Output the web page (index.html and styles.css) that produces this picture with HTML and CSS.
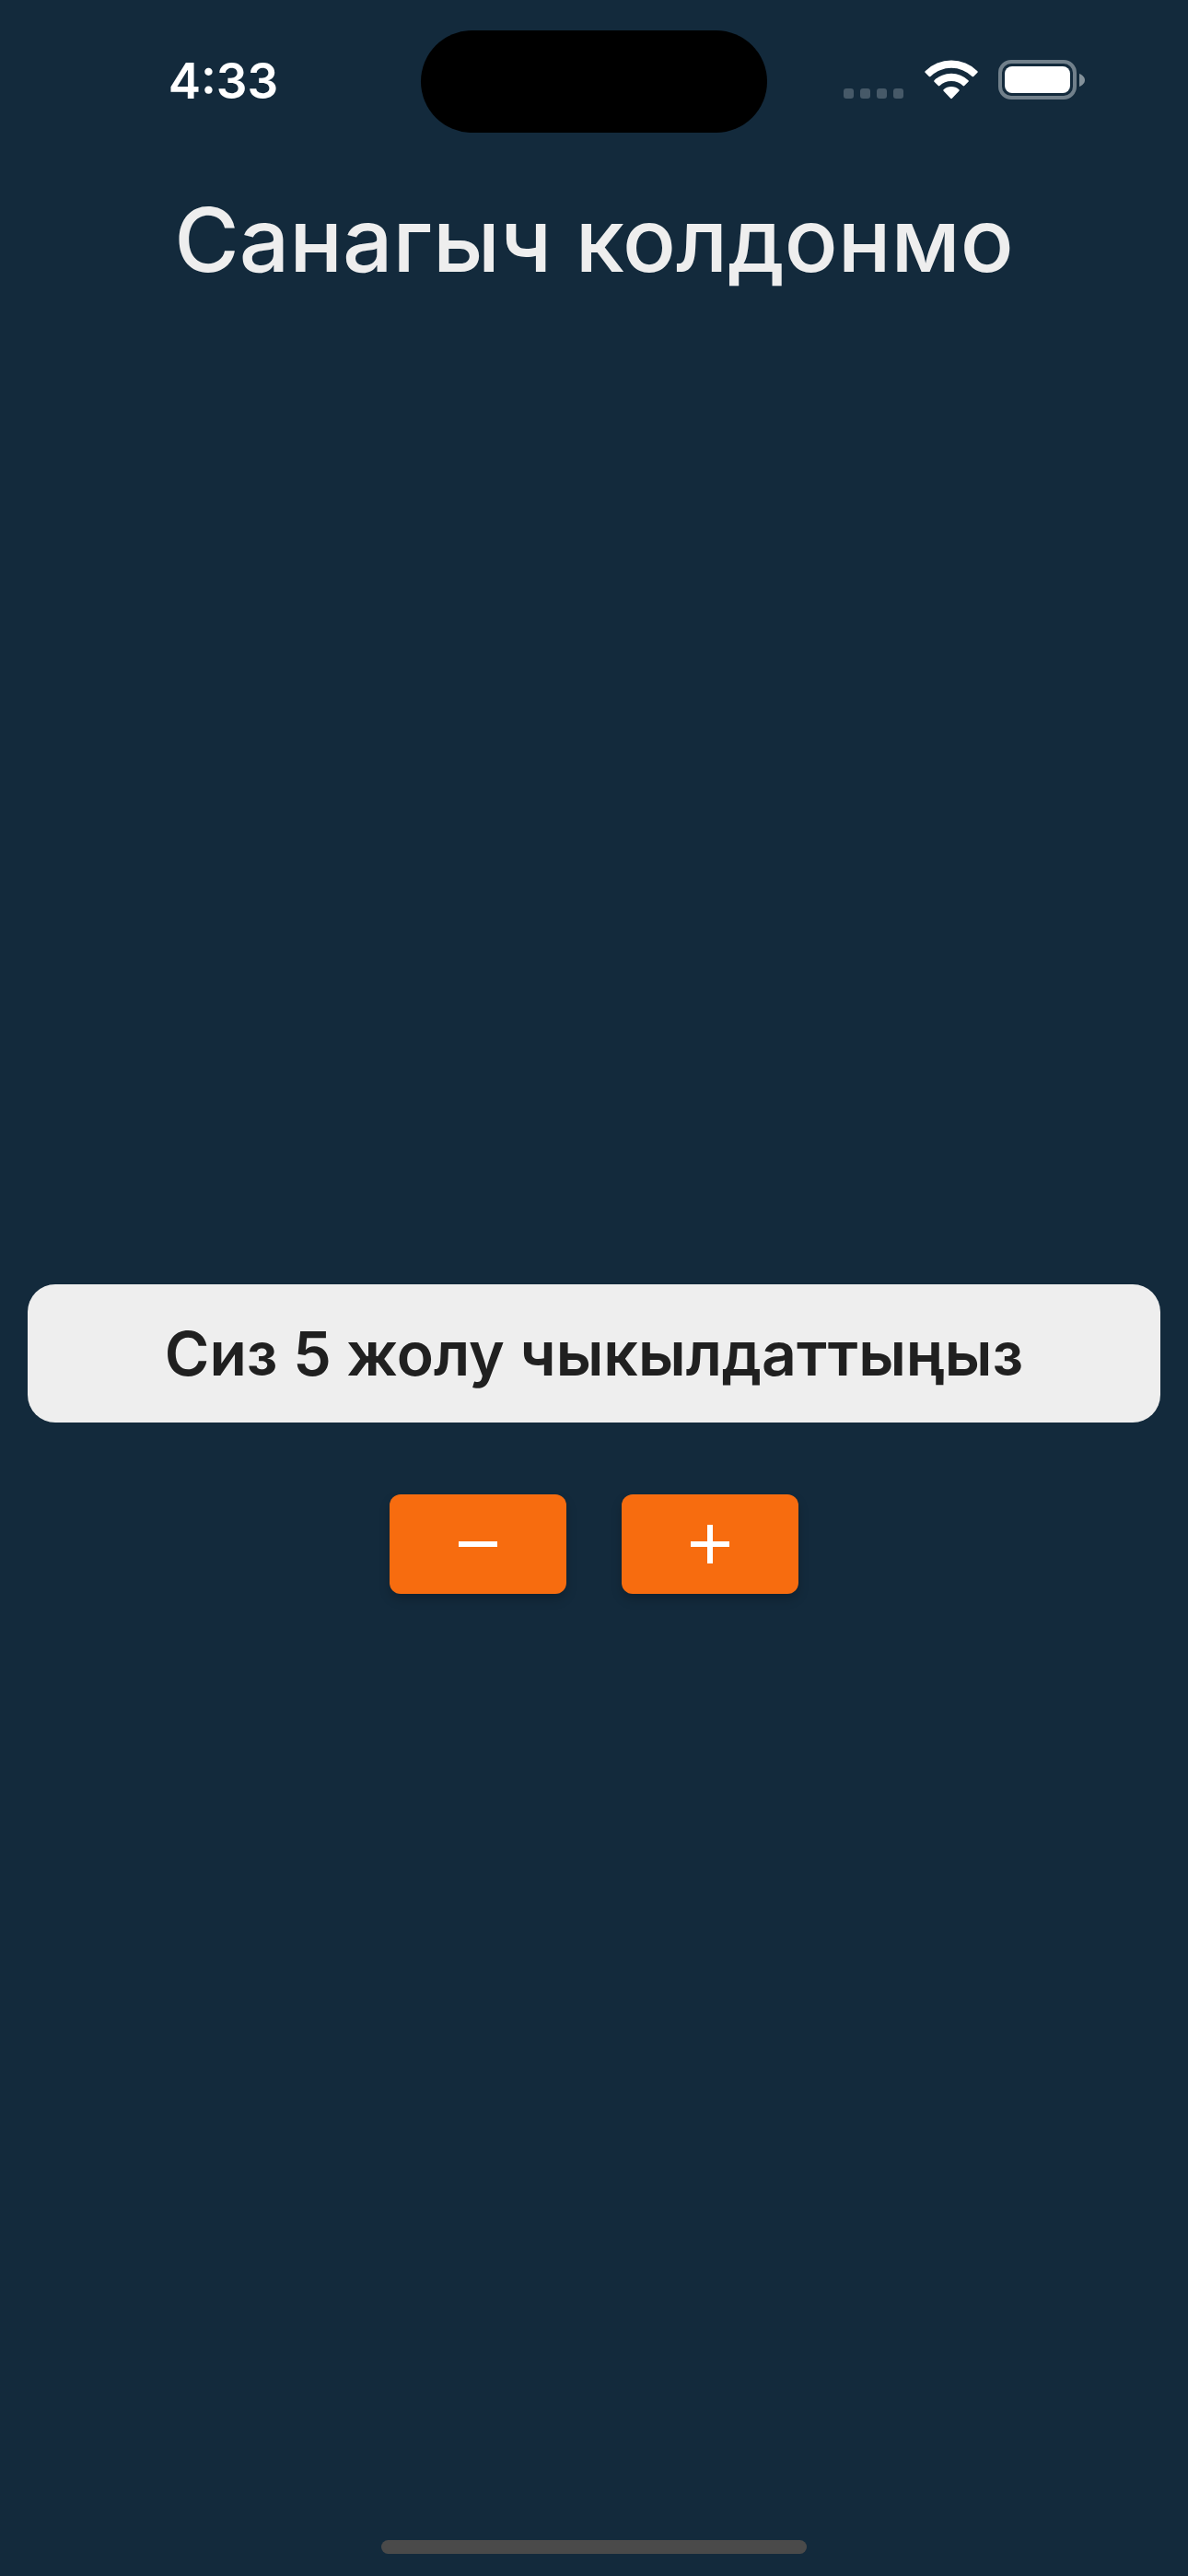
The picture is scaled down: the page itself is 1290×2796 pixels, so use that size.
FILE: index.html
```html
<!DOCTYPE html>
<html lang="ky">
<head>
<meta charset="utf-8">
<meta name="viewport" content="width=device-width, initial-scale=1">
<title>Санагыч колдонмо</title>
<link rel="stylesheet" href="styles.css">
</head>
<body>
<div class="screen">
  <div class="status-bar">
    <time class="clock">4:33</time>
    <div class="island"></div>
    <div class="indicators">
      <svg class="cellular" width="66" height="44" viewBox="0 0 66 44" aria-hidden="true">
        <rect x="0" y="31" width="11" height="11" rx="3"/>
        <rect x="18" y="31" width="11" height="11" rx="3"/>
        <rect x="36" y="31" width="11" height="11" rx="3"/>
        <rect x="54" y="31" width="11" height="11" rx="3"/>
      </svg>
      <svg class="wifi" width="58" height="44" viewBox="0 0 58 44" aria-hidden="true">
        <path d="M0.6 12.2a40.6 40.6 0 0 1 56.8 0q.7.8 0 1.6l-4.2 4.2q-.8.7-1.6 0a32.5 32.5 0 0 0-45.200 0q-.8.7-1.6 0l-4.200-4.200q-.7-.8 0-1.600z"/>
        <path d="M10.500 22.200a26.600 26.600 0 0 1 37 0q.7.8 0 1.600l-4.300 4.300q-.8.7-1.600 0a18.300 18.300 0 0 0-25.200 0q-.8.7-1.600 0l-4.300-4.300q-.7-.8 0-1.600z"/>
        <path d="M20.600 32.200a12.500 12.500 0 0 1 16.800 0q.8.8 0 1.600l-7.600 8q-.8.7-1.600 0l-7.600-8q-.8-.8 0-1.600z"/>
      </svg>
      <svg class="battery" width="95" height="44" viewBox="0 0 95 44" aria-hidden="true">
        <rect class="battery-case" x="2" y="2" width="81" height="39" rx="12"/>
        <path class="battery-tip" d="M88 15v14c3.500-1.500 6-4 6-7s-2.500-5.500-6-7z"/>
        <rect x="7" y="7" width="71" height="29" rx="8"/>
      </svg>
    </div>
  </div>
  <header class="app-bar">
    <h1 class="title">Санагыч колдонмо</h1>
  </header>
  <main class="content">
    <output class="counter" id="counter">Сиз 5 жолу чыкылдаттыңыз</output>
    <div class="actions">
      <button class="action" type="button" aria-label="Кемитүү">
        <svg width="72" height="72" viewBox="0 0 24 24" aria-hidden="true"><path d="M19 13H5v-2h14z"/></svg>
      </button>
      <button class="action" type="button" aria-label="Кошуу">
        <svg width="72" height="72" viewBox="0 0 24 24" aria-hidden="true"><path d="M19 13h-6v6h-2v-6H5v-2h6V5h2v6h6z"/></svg>
      </button>
    </div>
  </main>
  <div class="home-indicator"></div>
</div>
</body>
</html>
```

FILE: styles.css
```css
* {
  box-sizing: border-box;
}

body {
  margin: 0;
  background: #132a3c;
  font-family: Inter, "Liberation Sans", sans-serif;
}

.screen {
  position: relative;
  display: flex;
  flex-direction: column;
  min-height: 100vh;
}

.status-bar {
  display: grid;
  grid-template-columns: 1fr 376px 1fr;
  align-items: center;
  height: 177px;
}

.clock {
  padding-bottom: 2px;
  padding-left: 28px;
  color: #fff;
  font-size: 53px;
  font-weight: 600;
  line-height: 64px;
  text-align: center;
}

.island {
  height: 111px;
  border-radius: 56px;
  background: #000;
}

.indicators {
  display: flex;
  justify-content: center;
  gap: 22px;
  padding-right: 28px;
  padding-bottom: 4px;
  fill: #fff;
}

.cellular {
  fill: #465968;
}

.battery-case {
  fill: none;
  stroke: #71808b;
  stroke-width: 4;
}

.battery-tip {
  fill: #84919a;
}

.app-bar {
  display: flex;
  align-items: center;
  justify-content: center;
  min-height: 168px;
}

.title {
  margin: 0;
  padding-bottom: 2px;
  color: #eee;
  font-size: 96px;
  font-weight: 500;
  line-height: 120px;
  text-align: center;
}

.content {
  display: flex;
  flex: 1;
  flex-direction: column;
  justify-content: center;
  gap: 60px;
  padding: 0 30px;
}

.counter {
  display: flex;
  align-items: center;
  justify-content: center;
  min-height: 150px;
  border-radius: 30px;
  background: #eee;
  color: #202020;
  font-size: 66px;
  font-weight: 600;
  line-height: 80px;
  text-align: center;
}

.actions {
  display: flex;
  justify-content: center;
  gap: 60px;
  padding: 18px 0;
}

.action {
  display: flex;
  align-items: center;
  justify-content: center;
  width: 192px;
  height: 108px;
  padding: 0;
  border: 0;
  border-radius: 12px;
  background: #f76c0f;
  box-shadow: 0 6px 12px rgb(0 0 0 / 20%);
  fill: #fff;
  cursor: pointer;
}

.home-indicator {
  position: absolute;
  bottom: 24px;
  left: 50%;
  width: 462px;
  height: 15px;
  margin-left: -231px;
  border-radius: 8px;
  background: #4a4a4a;
}
```
